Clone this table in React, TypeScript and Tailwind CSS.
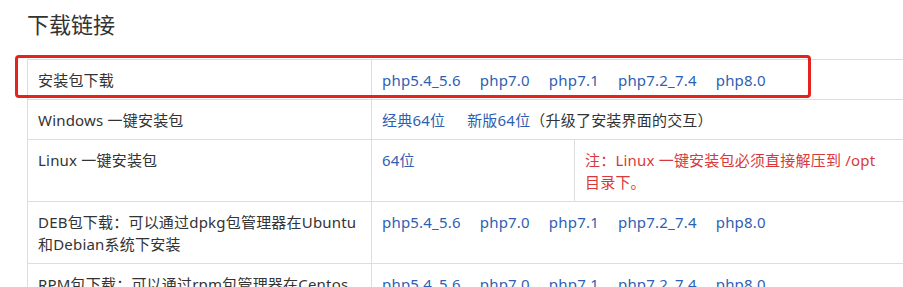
const PHP_VERSIONS = ["php5.4_5.6", "php7.0", "php7.1", "php7.2_7.4", "php8.0"];

const cell =
  "border border-[#dddddd] px-[10px] pt-[9px] pb-[8px] align-top leading-[22px] text-left font-normal";

function PhpLinks() {
  return (
    <div className="flex gap-x-[19px]">
      {PHP_VERSIONS.map((v) => (
        <a key={v} href="#" className="text-[#2f5fb3]">
          {v}
        </a>
      ))}
    </div>
  );
}

export default function App() {
  return (
    <div
      className="relative h-[287px] w-[903px] overflow-hidden bg-white text-[15px] tracking-[0.2px] text-[#333333]"
      style={{ fontFamily: '"Noto Sans", "Noto Sans CJK SC", sans-serif' }}
    >
      <h2 className="ml-[27px] pt-[9px] text-[22px] leading-[30px] font-normal tracking-normal">下载链接</h2>

      <div className="relative mt-[20px] ml-[27px]">
        <table className="w-[890px] table-fixed border-collapse">
          <colgroup>
            <col className="w-[344px]" />
            <col className="w-[203px]" />
            <col />
          </colgroup>
          <tbody>
            <tr>
              <td className={cell}>安装包下载</td>
              <td className={cell} colSpan={2}>
                <PhpLinks />
              </td>
            </tr>
            <tr>
              <td className={cell}>Windows 一键安装包</td>
              <td className={cell} colSpan={2}>
                <a href="#" className="text-[#2f5fb3]">
                  经典64位
                </a>
                <a href="#" className="ml-[22px] text-[#2f5fb3]">
                  新版64位
                </a>
                <span>（升级了安装界面的交互）</span>
              </td>
            </tr>
            <tr>
              <td className={cell}>Linux 一键安装包</td>
              <td className={cell}>
                <a href="#" className="text-[#2f5fb3]">
                  64位
                </a>
              </td>
              <td className={cell}>
                <p className="max-w-[300px] text-[#d9383a]">
                  注：Linux 一键安装包必须直接解压到 /opt 目录下。
                </p>
              </td>
            </tr>
            <tr>
              <td className={cell}>DEB包下载：可以通过dpkg包管理器在Ubuntu和Debian系统下安装</td>
              <td className={cell} colSpan={2}>
                <PhpLinks />
              </td>
            </tr>
            <tr>
              <td className={cell}>RPM包下载：可以通过rpm包管理器在Centos系统下安装</td>
              <td className={cell} colSpan={2}>
                <PhpLinks />
              </td>
            </tr>
          </tbody>
        </table>

        <div className="pointer-events-none absolute top-[-4px] left-[-12px] h-[43px] w-[796px] rounded-[4px] border-[3px] border-[#e3231d]" />
      </div>
    </div>
  );
}
